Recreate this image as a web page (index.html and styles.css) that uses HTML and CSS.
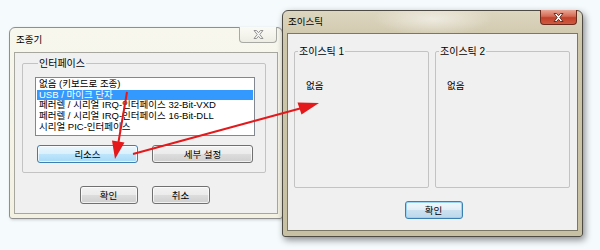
FILE: index.html
```html
<!DOCTYPE html>
<html lang="ko">
<head>
    <meta charset="UTF-8">
    <meta name="viewport" content="width=device-width, initial-scale=1.0">
    <title>조종기 / 조이스틱</title>
    <link rel="stylesheet" href="styles.css">
</head>
<body>

<div class="desktop">

    <!-- Controller dialog (inactive) -->
    <div class="window window-inactive controller">
        <div class="titlebar">
            <span class="title">조종기</span>
            <div class="close-btn">
                <svg width="11" height="9" viewBox="0 0 11 9">
                    <path d="M1 0.5h2.6l1.9 2.2 1.9-2.2h2.6l-3.2 4 3.2 4h-2.6l-1.9-2.2-1.9 2.2h-2.6l3.2-4z" fill="#f4f4f4" stroke="#8a8a8a" stroke-width="0.9"/>
                </svg>
            </div>
        </div>
        <div class="client">
            <fieldset class="group iface-group">
                <legend>인터페이스</legend>
                <ul class="listbox">
                    <li>없음 (키보드로 조종)</li>
                    <li class="selected">USB / 마이크 단자</li>
                    <li>페러렐 / 시리얼 IRQ-인터페이스 32-Bit-VXD</li>
                    <li>페러렐 / 시리얼 IRQ-인터페이스 16-Bit-DLL</li>
                    <li>시리얼 PIC-인터페이스</li>
                </ul>
                <div class="btn-row group-buttons">
                    <button class="btn btn-hot">리소스</button>
                    <button class="btn">세부 설정</button>
                </div>
            </fieldset>
            <div class="btn-row dialog-buttons">
                <button class="btn btn-small">확인</button>
                <button class="btn btn-small">취소</button>
            </div>
        </div>
    </div>

    <!-- Joystick dialog (active) -->
    <div class="window window-active joystick">
        <div class="titlebar">
            <span class="title">조이스틱</span>
            <div class="close-btn close-red">
                <svg width="11" height="9" viewBox="0 0 11 9">
                    <path d="M1 0.5h2.6l1.9 2.2 1.9-2.2h2.6l-3.2 4 3.2 4h-2.6l-1.9-2.2-1.9 2.2h-2.6l3.2-4z" fill="#ffffff" stroke="#5b2418" stroke-width="0.9"/>
                </svg>
            </div>
        </div>
        <div class="client">
            <div class="stick-row">
                <fieldset class="group stick-group">
                    <legend>조이스틱 1</legend>
                    <div class="stick-value">없음</div>
                </fieldset>
                <fieldset class="group stick-group">
                    <legend>조이스틱 2</legend>
                    <div class="stick-value">없음</div>
                </fieldset>
            </div>
            <div class="btn-row dialog-buttons">
                <button class="btn btn-small btn-default">확인</button>
            </div>
        </div>
    </div>

    <!-- Red annotation arrows -->
    <svg class="arrows" width="600" height="250" viewBox="0 0 600 250">
        <g stroke="#e3191c" stroke-width="2" fill="none">
            <line x1="127" y1="92" x2="118.5" y2="142"/>
            <line x1="133" y1="154" x2="300" y2="108.5"/>
        </g>
        <g fill="#e3191c">
            <polygon points="115,159 112,140.5 124.5,142.5"/>
            <polygon points="319,103 297.5,102.5 301.5,114.5"/>
        </g>
    </svg>

</div>

</body>
</html>
```

FILE: styles.css
```css
/* Page / desktop */
body {
    margin: 0;
    font-family: "Liberation Sans", "Noto Sans CJK KR", sans-serif;
    font-size: 9px;
    color: #000;
}

.desktop {
    position: relative;
    width: 600px;
    height: 250px;
    overflow: hidden;
    background-color: #f5fafd;
}

/* Base window frame */
.window {
    position: absolute;
    display: flex;
    flex-direction: column;
    box-sizing: border-box;
    border-radius: 6px 6px 3px 3px;
}

.titlebar {
    position: relative;
    display: flex;
    align-items: center;
    flex: none;
    padding-left: 5px;
}

.title {
    font-size: 9.5px;
    line-height: 12px;
}

.client {
    flex: 1;
    display: flex;
    flex-direction: column;
    background-color: #f0f0f0;
    border: 1px solid #a7a7a0;
}

/* Inactive controller window */
.controller {
    left: 9px;
    top: 27px;
    width: 274px;
    height: 192px;
    border: 1px solid #8f8f8f;
    background: linear-gradient(to bottom, #f8f7ee, #f3f1e2);
    box-shadow: 1px 1px 3px rgba(0, 0, 0, 0.18);
}

.controller .titlebar {
    height: 24px;
    padding-left: 6px;
}

.controller .client {
    margin: 0 4px 4px 4px;
}

/* Active joystick window */
.joystick {
    left: 282px;
    top: 10px;
    width: 301px;
    height: 227px;
    border: 1px solid #4d4b44;
    background:
        radial-gradient(ellipse 60px 16px at 150px 8px, rgba(255, 255, 255, 0.55), rgba(255, 255, 255, 0)),
        linear-gradient(to bottom, #ddd6c0, #cec6aa 30px, #c8c0a3);
    box-shadow: 2px 3px 7px rgba(0, 0, 0, 0.45);
}

.joystick .titlebar {
    height: 22px;
}

.joystick .client {
    margin: 0 4px 5px 4px;
    border-color: #7b7766;
}

/* Title bar close buttons */
.close-btn {
    position: absolute;
    top: -1px;
    right: 5px;
    width: 38px;
    height: 16px;
    display: flex;
    justify-content: center;
    align-items: center;
    box-sizing: border-box;
    border: 1px solid #a9a9a4;
    border-top: none;
    border-radius: 0 0 4px 4px;
    background: linear-gradient(to bottom, #fbfbf6, #eeede4);
}

.close-red {
    width: 37px;
    height: 15px;
    border-color: #6a2c1f;
    background: linear-gradient(to bottom, #e9a898 0%, #d56a55 45%, #c2412a 55%, #d05a3f 100%);
}

/* Group boxes */
.group {
    margin: 0;
    padding: 0;
    border: 1px solid #c3c3c3;
    border-radius: 2px;
    min-width: 0;
}

.group legend {
    padding: 0 1px;
    margin-left: 3px;
    font-size: 10px;
    line-height: 11px;
}

.iface-group {
    margin: 5px 11px 0 7px;
    padding: 8px 10px 9px 12px;
}

/* Listbox */
.listbox {
    list-style: none;
    margin: 0;
    padding: 1px;
    height: 59px;
    box-sizing: border-box;
    background-color: #fff;
    border: 1px solid #828790;
    font-size: 9.5px;
}

.listbox li {
    height: 10.7px;
    line-height: 10.7px;
    padding-left: 2px;
    white-space: nowrap;
}

.listbox li.selected {
    background-color: #3399ff;
    color: #fff;
}

/* Buttons */
.btn-row {
    display: flex;
    gap: 14px;
}

.group-buttons {
    margin-top: 9px;
    padding: 0 2px;
}

.dialog-buttons {
    justify-content: center;
    margin-top: 13px;
    padding-right: 3px;
}

.btn {
    width: 101px;
    height: 18px;
    padding: 0;
    font-family: inherit;
    font-size: 9.5px;
    color: #000;
    border: 1px solid #707070;
    border-radius: 3px;
    background: linear-gradient(to bottom, #f2f2f2 0%, #ebebeb 50%, #dddddd 50%, #cfcfcf 100%);
    box-shadow: inset 0 0 0 1px rgba(255, 255, 255, 0.7);
}

.btn-small {
    width: 58px;
}

.btn-hot {
    border-color: #3c7fb1;
    background: linear-gradient(to bottom, #eaf6fd 0%, #d9f0fc 50%, #bee6fd 50%, #a7d9f5 100%);
}

.btn-default {
    border-color: #3c7fb1;
    background: linear-gradient(to bottom, #f1f8fc 0%, #e1eef7 50%, #cde2f0 50%, #bcd8ec 100%);
    box-shadow: inset 0 0 0 1px #9ad3f4;
}

/* Joystick groups */
.stick-row {
    display: flex;
    gap: 6px;
    margin: 12px 7px 0 6px;
}

.stick-group {
    width: 135px;
    height: 142px;
    box-sizing: border-box;
}

.stick-value {
    padding: 21px 0 0 11px;
    font-size: 9.5px;
}

.joystick .dialog-buttons {
    margin-top: 13px;
    padding-right: 0;
    padding-left: 2px;
}

/* Annotation overlay */
.arrows {
    position: absolute;
    left: 0;
    top: 0;
    pointer-events: none;
}
```
